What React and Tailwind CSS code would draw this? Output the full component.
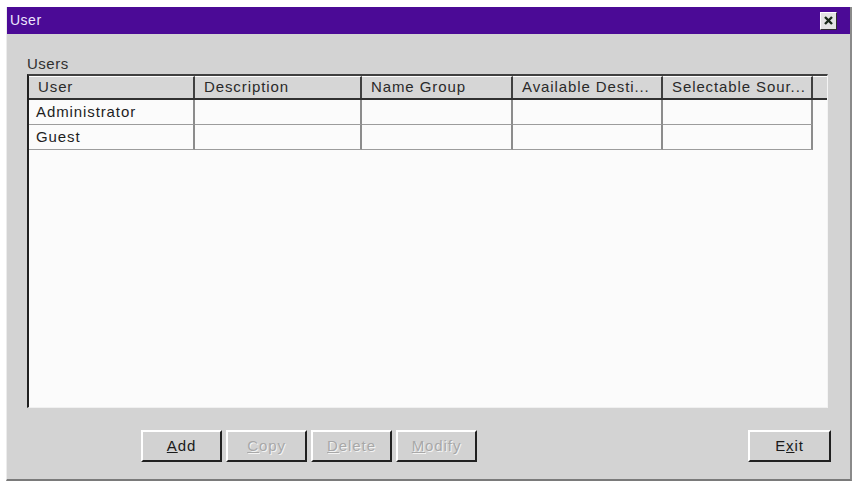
import React from "react";

const columns = [
  { label: "User", width: "w-[166px]" },
  { label: "Description", width: "w-[167px]" },
  { label: "Name Group", width: "w-[151px]" },
  { label: "Available Desti...", width: "w-[150px]" },
  { label: "Selectable Sour...", width: "w-[150px]" },
];

const rows = ["Administrator", "Guest"];

const font = { fontFamily: '"Liberation Sans", Arial, sans-serif' };

// Win9x style push button
const PushButton = ({ children, disabled, className = "" }) => (
  <div
    className={`h-[32px] border-t-2 border-l-2 border-t-white border-l-white border-r-2 border-b-2 border-r-[#202020] border-b-[#202020] bg-[#d2d2d2] flex items-center justify-center text-[15px] tracking-[0.9px] ${className}`}
  >
    <span
      className={disabled ? "text-[#a8a8a8]" : "text-[#1a1a1a]"}
      style={disabled ? { textShadow: "1px 1px 0 #f4f4f4" } : undefined}
    >
      {children}
    </span>
  </div>
);

const App = () => {
  return (
    <div className="w-[853px] h-[482px] bg-white pt-[7px] pl-[6px] pr-[1px] pb-[1px]" style={font}>
      <div className="h-full flex flex-col bg-[#d3d3d3] border-l border-l-[#ececec] border-r-2 border-r-[#8a8a8a] border-b-2 border-b-[#7a7a7a]">
        {/* Title bar */}
        <div className="h-[27px] bg-[#4b0a96] flex items-center justify-between pl-[3px] pr-[13px]">
          <span className="text-[14px] text-[#eee6ff] tracking-[0.5px]">User</span>
          <div className="w-[17px] h-[18px] bg-[#e4e4e4] border border-t-white border-l-white border-r-[#303030] border-b-[#303030] flex items-center justify-center">
            <svg width="11" height="11" viewBox="0 0 11 11">
              <path d="M2 2 L9 9 M9 2 L2 9" stroke="#1a2a1a" strokeWidth="2.4" />
            </svg>
          </div>
        </div>

        {/* Body */}
        <div className="flex-1 flex flex-col pl-[20px] pr-[22px]">
          <div className="mt-[19px] h-[21px] text-[15px] text-[#303030] tracking-[0.5px]">Users</div>

          {/* List view */}
          <div className="h-[334px] border-t-2 border-l-2 border-t-[#404040] border-l-[#202020] border-r border-b border-r-[#f4f4f4] border-b-[#f0f0f0] bg-[#fbfbfb] flex flex-col">
            <div className="flex h-[24px] border-b-2 border-b-[#303030]">
              {columns.map((c) => (
                <div
                  key={c.label}
                  className={`${c.width} shrink-0 bg-[#d6d6d6] border-t border-t-white border-r-2 border-r-[#404040] pl-[9px] flex items-center text-[15px] tracking-[0.9px] text-[#2a2a2a] whitespace-nowrap overflow-hidden`}
                >
                  {c.label}
                </div>
              ))}
              <div className="flex-1 bg-[#d6d6d6] border-t border-t-white" />
            </div>
            {rows.map((r) => (
              <div key={r} className="flex h-[25px]">
                {columns.map((c, i) => (
                  <div
                    key={c.label}
                    className={`${c.width} shrink-0 border-b border-b-[#9c9c9c] border-r-2 border-r-[#8c8c8c] pl-[7px] flex items-center text-[15px] tracking-[0.9px] text-[#1e1e1e] whitespace-nowrap`}
                  >
                    {i === 0 ? r : ""}
                  </div>
                ))}
              </div>
            ))}
          </div>

          {/* Buttons */}
          <div className="mt-[22px] flex items-start">
            <div className="ml-[114px] flex gap-[4px]">
              <PushButton className="w-[81px]">
                <u>A</u>dd
              </PushButton>
              <PushButton className="w-[81px]" disabled>
                <u>C</u>opy
              </PushButton>
              <PushButton className="w-[81px]" disabled>
                <u>D</u>elete
              </PushButton>
              <PushButton className="w-[81px]" disabled>
                <u>M</u>odify
              </PushButton>
            </div>
            <PushButton className="ml-auto mr-[-3px] w-[83px]">
              E<u>x</u>it
            </PushButton>
          </div>
        </div>
      </div>
    </div>
  );
};

export default App;
